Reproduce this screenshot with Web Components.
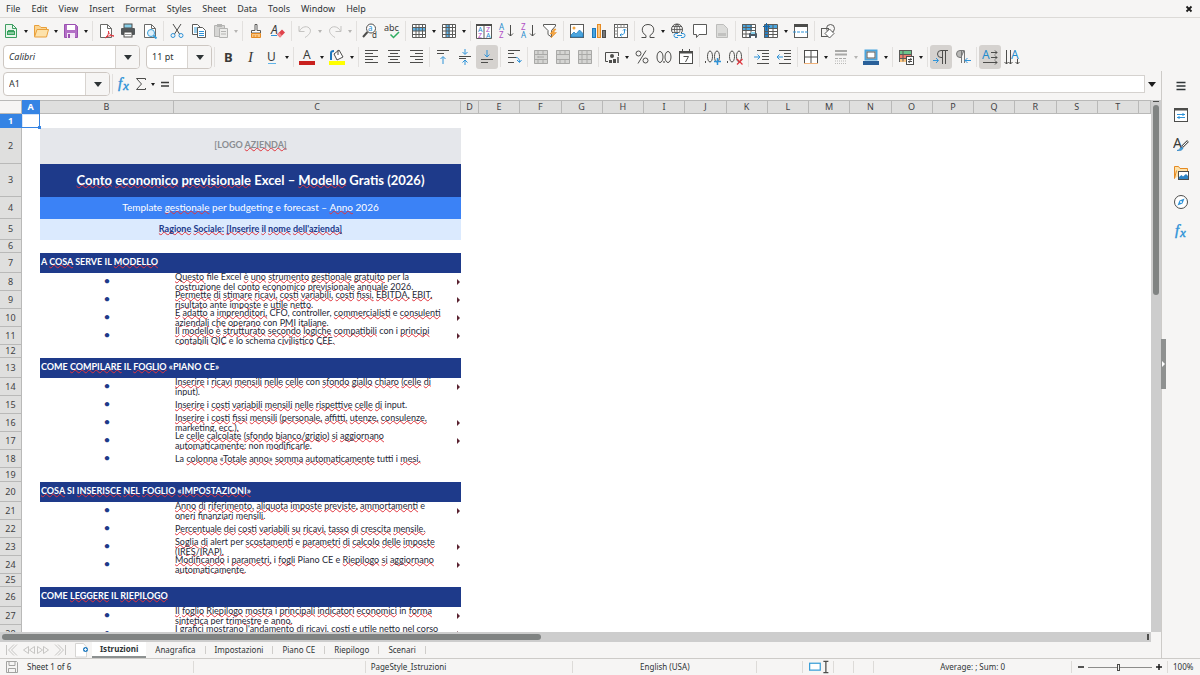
<!DOCTYPE html>
<html lang="it">
<head>
<meta charset="utf-8">
<title>Conto economico previsionale</title>
<style>
  html, body { margin: 0; height: 100%; }
  body {
    font-family: "Noto Sans", "Liberation Sans", sans-serif;
    font-size: 9px; line-height: 12px; color: #2e3436; background: #f6f5f4;
    overflow: hidden;
  }
</style>
</head>
<body>
<calc-window></calc-window>

<script>
/* Icon set: every entry is the body of a 16 by 16 svg. */
const K = 'fill="none" stroke="#4d4d4b"';
const B = 'fill="none" stroke="#2f93d8"';
const lines = (list, colour = '#4d4d4b') =>
  list.map(([x1, x2, y]) => `<path d="M${x1} ${y}H${x2}" stroke="${colour}" fill="none"/>`).join('');
const letter = (x, y, size, fill, ch, extra = '') =>
  `<text x="${x}" y="${y}" font-size="${size}" fill="${fill}" font-family="Noto Sans, sans-serif" ${extra}>${ch}</text>`;
const page = c => `<path d="M2.500 1.500H9.500L13.500 5.500V14.500H2.500Z" fill="#fff" stroke="${c}"/><path d="M9.500 1.500V5.500H13.500" fill="none" stroke="${c}"/>`;
const grid = c => `<path d="M1.500 1.500H14.500V14.500H1.500ZM1.500 4.500H14.500M1.500 8H14.500M1.500 11.500H14.500M5 1.500V14.500M8 1.500V14.500M11.500 1.500V14.500" fill="none" stroke="${c}"/>`;
const merged = mid => `<rect x="1" y="1" width="14" height="14" fill="#d5d5d3"/><path d="M1.500 1.500H14.500V14.500H1.500ZM1.500 5.500H14.500M1.500 10.500H14.500${mid}" fill="none" stroke="#a9a9a7"/>`;
const SERIF = 'font-style="italic" style="font-family:Liberation Serif"';
const ICONS = {
  new: page('#3f9f62').replace('#fff', '#e9f6ec') + '<path d="M5 7.500H11M5 10H11" stroke="#3f9f62"/><rect x="4" y="8" width="8" height="4" fill="#35a35c"/><path d="M5 10H11" stroke="#dff2e4"/>',
  open: '<path d="M1.500 13V2.500H6L8 4.500H13.500V6" fill="#fbd591" stroke="#e9a03b"/><path d="M1.500 14L4 6.500H15.500L13.500 14Z" fill="#fde2ab" stroke="#e9a03b"/>',
  save: '<path d="M1.500 1.500H12.500L14.500 3.500V14.500H1.500Z" fill="#b36fc6" stroke="#9a4fb0"/><rect x="4" y="2" width="8" height="5" fill="#fff"/><rect x="4" y="10" width="8" height="5" fill="#f4e8f7"/><rect x="5" y="11" width="2" height="4" fill="#9a4fb0"/>',
  pdf: page('#6a6a68') + '<path d="M7 15C10 13 11 10 10.500 8C10 10 13 13 16 13C13 12 9 13 7 15Z" fill="none" stroke="#e0343d"/>',
  print: '<rect x="4" y="1" width="8" height="4" fill="#8ad0ea" stroke="#4d4d4b"/><rect x="1" y="5" width="14" height="7" rx="1" fill="#54585a"/><rect x="4" y="9" width="8" height="5" fill="#fff" stroke="#4d4d4b"/><path d="M5 11.500H11" stroke="#9a9a98"/>',
  preview: page('#6a6a68') + `<circle cx="9" cy="10" r="3.500" fill="#dff0fa" stroke="#3b9fd8"/><path d="M11.500 12.500L14.500 15.500" stroke="#3b9fd8" stroke-width="2"/>`,
  cut: `<path d="M4 1L10.500 11M12 1L5.500 11" ${K}/><circle cx="4" cy="12.500" r="2" ${B}/><circle cx="12" cy="12.500" r="2" ${B}/>`,
  copy: '<path d="M1.500 1.500H6.500L9.500 4.500V11.500H1.500Z" fill="#fff" stroke="#5b5b59"/><path d="M3 5H8M3 7H8M3 9H8" stroke="#3b9fd8"/><path d="M6.500 4.500H11.500L14.500 7.500V14.500H6.500Z" fill="#fff" stroke="#5b5b59"/><path d="M8 8.500H13M8 10.500H13M8 12.500H13" stroke="#2f93d8"/>',
  paste: '<path d="M1.500 2.500H11.500V13.500H1.500Z" fill="#d6d6d4" stroke="#b4b4b2"/><rect x="4" y="1" width="5" height="3" fill="#b4b4b2"/><path d="M6.500 5.500H14.500V14.500H6.500Z" fill="#ececea" stroke="#b4b4b2"/><path d="M8 8.500H13M8 11H13" stroke="#b4b4b2"/>',
  clone: `<path d="M7 1.500H9V7.500H12.500V10H3.500V7.500H7Z" fill="#fff" stroke="#5b5b59"/><path d="M3.500 10.500H12.500V14.500H3.500Z" fill="#fbc682" stroke="#e58a22"/><path d="M6 12V14M9 12V14" stroke="#e58a22"/>`,
  clear: letter(1, 11, 12, '#3a3a38', 'A', 'font-style="italic"') + '<path d="M1 12.500H7" stroke="#2f93d8"/><path d="M7 11.500L12 6.500L15 9.500L10 14.500Z" fill="#e0434b"/><path d="M7 11.500L9 9.500L12 12.500L10 14.500Z" fill="#f08a8f"/>',
  undo: '<path d="M2 3V8.500H7.500M2.500 8C5 3 11 2.500 13 6C14.500 9 12 12 8 14.500" fill="none" stroke="#c4c3c1"/>',
  redo: '<path d="M14 3V8.500H8.500M13.500 8C11 3 5 2.500 3 6C1.500 9 4 12 8 14.500" fill="none" stroke="#c4c3c1"/>',
  find: `<circle cx="9" cy="5.500" r="4.500" fill="#fff" stroke="#4d4d4b"/><path d="M5.500 9L1 14" stroke="#4d4d4b" stroke-width="2"/>` + letter(6, 8, 8, '#1e8bcd', 'a') + letter(10, 15, 8, '#3a3a38', 'd'),
  spell: letter(0, 8, 9, '#3a3a38', 'abc') + '<path d="M6.500 11.500L9.500 14.500L15 9" fill="none" stroke="#2fae62" stroke-width="1.500"/>',
  row: '<rect x="1" y="1" width="14" height="14" fill="#fff"/><rect x="1" y="4" width="14" height="4" fill="#5fb3e8"/>' + grid('#5b5b59'),
  col: '<rect x="1" y="1" width="14" height="14" fill="#fff"/><rect x="5" y="1" width="4" height="14" fill="#5fb3e8"/>' + grid('#5b5b59'),
  sort: '<path d="M.500 1.500H15.500V15.500H.500ZM8 1V15.500" fill="#fff" stroke="#5b5b59"/><path d="M0 2H16" stroke="#4d4d4b" stroke-width="2"/>' + letter(2, 9, 7, '#1e8bcd', 'A') + letter(2, 15, 7, '#b14fc4', 'Z') + letter(10, 9, 7, '#b14fc4', 'Z') + letter(10, 15, 7, '#1e8bcd', 'A'),
  asc: letter(1, 7, 8, '#1e8bcd', 'A') + letter(1, 15, 8, '#b14fc4', 'Z') + `<path d="M12.500 2V13M10 10.500L12.500 13L15 10.500" ${K}/>`,
  desc: letter(1, 7, 8, '#b14fc4', 'Z') + letter(1, 15, 8, '#1e8bcd', 'A') + `<path d="M12.500 2V13M10 10.500L12.500 13L15 10.500" ${K}/>`,
  filter: '<path d="M1.500 1.500H13.500V3L9.500 7.500V14L6 11.500V7.500L1.500 3Z" fill="#fff" stroke="#5b5b59"/><path d="M12 6L8 11H11L9 15L14.500 9.500H11.500L14 6Z" fill="#f5a742" stroke="#e58a22" stroke-width=".5"/>',
  image: '<rect x="1.500" y="1.500" width="13" height="13" fill="#fff" stroke="#5b5b59"/><circle cx="5" cy="5" r="1.500" fill="#f5a742"/><path d="M2 14V12L5 9L7 11L10.500 7L14 10.500V14Z" fill="#4aa5de" stroke="#1e78bd" stroke-width=".7"/>',
  chart: '<rect x="1.500" y="5.500" width="3" height="9" fill="#4aa5de" stroke="#1e78bd"/><rect x="6.500" y="1.500" width="3" height="13" fill="#fbc682" stroke="#e58a22"/><rect x="11.500" y="7.500" width="3" height="7" fill="#777" stroke="#4d4d4b"/>',
  pivot: `<rect x="1.500" y="1.500" width="13" height="13" fill="#fff" stroke="#5b5b59"/><path d="M1.500 4.500H14.500M4.500 1.500V14.500M8 1.500V4.500M11 1.500V4.500M1.500 8H4.500M1.500 11H4.500" fill="none" stroke="#8b8b89"/><path d="M11.500 6V9C11.500 11 10 12 7 12M10 7.500L11.500 6L13 7.500M8.500 10.500L7 12L8.500 13.500" ${B}/>`,
  omega: `<path d="M1.500 14.500H6V12.500C.500 9.500 1 1.500 8 1.500C15 1.500 15.500 9.500 10 12.500V14.500H14.500" ${K}/>`,
  link: `<circle cx="7" cy="6.500" r="5.500" ${K}/><path d="M7 1V12M1.500 6.500H12.500M2.500 3.500H11.500M2.500 9.500H9M7 1C3.500 4 3.500 9 7 12M7 1C10.500 4 10.500 8 9 10" ${K} stroke-width=".8"/><rect x="3" y="10" width="13" height="6" fill="#f6f5f4"/><path d="M8 10.500H6A2 2 0 0 0 6 14.500H8M11 10.500H13A2 2 0 0 1 13 14.500H11M7 12.500H12" ${B}/>`,
  comment: '<path d="M1.500 1.500H14.500V11.500H7L4.500 14.500V11.500H1.500Z" fill="#fff" stroke="#5b5b59"/>',
  footer: '<path d="M2.500 1.500H9.500L13.500 5.500V14.500H2.500Z" fill="#dcdcda" stroke="#bdbdbb"/><rect x="4" y="10" width="8" height="3" fill="#c2c2c0"/>',
  area: '<rect x="1" y="1" width="14" height="13" fill="#fff"/><rect x="1" y="1" width="10" height="6" fill="#4aa5de"/><path d="M1.500 1.500H14.500V14.500H1.500ZM1.500 4.500H14.500M1.500 7.500H14.500M1.500 11H14.500M5 1.500V14.500M10 1.500V14.500" fill="none" stroke="#5b5b59"/><rect x="8" y="10" width="8" height="5" rx="1" fill="#4d5a66"/><rect x="10" y="9" width="4" height="2" fill="#8ad0ea"/><rect x="10" y="13" width="4" height="2" fill="#fff"/>',
  freeze: '<rect x="1" y="2" width="14" height="13" fill="#fff"/><rect x="1" y="2" width="14" height="4" fill="#4aa5de"/><rect x="1" y="2" width="4" height="13" fill="#2a80c2"/><path d="M1.500 1.500H14.500V14.500H1.500ZM5.500 5.500H14.500M5.500 8.500H14.500M5.500 11.500H14.500M5.500 1.500V14.500M10 1.500V14.500M1.500 8.500H5M1.500 11.500H5" fill="none" stroke="#5b5b59"/><path d="M3.500 0V7M0 3.500H7" stroke="#1667a8"/>',
  split: `<rect x="1.500" y="1.500" width="13" height="13" fill="#fff" stroke="#5b5b59"/><rect x="1" y="1" width="14" height="3" fill="#4d4d4b"/><path d="M0 9H16" ${B} stroke-dasharray="3 1"/>`,
  shapes: '<rect x="1.500" y="5.500" width="7" height="8" fill="#f6f5f4" stroke="#5b5b59"/><circle cx="10.500" cy="5.500" r="4" fill="none" stroke="#5b5b59"/><path d="M9.500 6L14 10.500L9.500 15L5 10.500Z" fill="#fff" stroke="#5b5b59"/>',
  bold: letter(4, 13, 13, '#3a3a38', 'B', 'font-weight="bold"'),
  italic: letter(6, 13, 15, '#3a3a38', 'I', SERIF),
  underline: letter(3, 12, 12, '#3a3a38', 'U') + '<path d="M4 14.500H12" stroke="#5fb3e8"/>',
  fontcolor: letter(4, 10, 12, '#3a3a38', 'A') + '<rect x="0" y="12" width="16" height="4" fill="#c9211e"/>',
  highlight: '<path d="M2 11V4Q2 2 5 2" stroke="#1e78bd" stroke-width="2" fill="none"/><path d="M5 5L10 1L14 8L8 11Z" fill="#fff" stroke="#4d4d4b"/><path d="M9 1V6" stroke="#4d4d4b"/><rect x="0" y="12" width="16" height="4" fill="#ff0"/>',
  left: lines([[1, 14, 1.5], [1, 9, 4.5], [1, 14, 7.5], [1, 9, 10.5], [1, 14, 13.5]]),
  center: lines([[2, 14, 1.5], [4, 12, 4.5], [2, 14, 7.5], [4, 12, 10.5], [2, 14, 13.5]]),
  right: lines([[2, 15, 1.5], [7, 15, 4.5], [2, 15, 7.5], [7, 15, 10.5], [2, 15, 13.5]]),
  top: lines([[2, 14, 1.5], [2, 9, 4.5]]) + `<path d="M8 15V8M5.500 10L8 7.500L10.500 10" ${B}/>`,
  middle: lines([[2, 14, 7.5], [2, 9, 9.5]]) + `<path d="M8 0V5M5.500 3L8 5.500L10.500 3M8 16V12M5.500 13.500L8 11L10.500 13.500" ${B}/>`,
  bottom: lines([[2, 14, 10.5], [2, 9, 13.5]]) + `<path d="M8 1V8M5.500 5.500L8 8L10.500 5.500" ${B}/>`,
  wrap: lines([[2, 14, 1.5], [2, 8, 4.5], [2, 10, 8.5], [2, 8, 13.5]]) + `<path d="M10 8.500Q13.500 8.500 13.500 13M11 11L13.500 13.500L15.500 11" ${B}/>`,
  merge1: merged('M5 1.500V5.500M10 1.500V5.500M5 10.500V14.500M10 10.500V14.500M5 7V9M5 8H11'),
  merge2: merged('M5 1.500V5.500M10 1.500V5.500M5 10.500V14.500M10 10.500V14.500'),
  merge3: merged('M5 1.500V14.500M10 1.500V14.500'),
  currency: '<path d="M1.500 12.500V3.500H14.500V7" fill="none" stroke="#4d4d4b"/><path d="M1.500 12.500H4" stroke="#4d4d4b"/><circle cx="8" cy="7" r="2" fill="#4d4d4b"/><rect x="5" y="11" width="3" height="3" fill="#4d4d4b"/><rect x="9" y="10" width="3" height="4" fill="#4d4d4b"/><rect x="13" y="8" width="2" height="6" fill="#777"/>',
  percent: `<circle cx="4.500" cy="4.500" r="2.500" ${K}/><circle cx="11.500" cy="11.500" r="2.500" ${K}/><path d="M12 1.500L4 14.500" ${K}/>`,
  number: `<ellipse cx="4" cy="8" rx="3" ry="5.500" ${K}/><ellipse cx="12" cy="8" rx="3" ry="5.500" ${K}/><path d="M8 12V14" stroke="#3a3a38"/>`,
  date: '<rect x="1.500" y="2.500" width="13" height="12" fill="#fff" stroke="#4d4d4b"/><path d="M1 3.500H15" stroke="#4d4d4b" stroke-width="2"/><path d="M4.500 0V3M11.500 0V3" stroke="#4d4d4b"/><path d="M5.500 7.500H10.500L7.500 13" fill="none" stroke="#4d4d4b"/>',
  adddec: `<path d="M.500 12V14" ${K}/><ellipse cx="5" cy="7.500" rx="2.500" ry="5.500" ${K}/><ellipse cx="12" cy="7.500" rx="2.500" ry="5.500" ${K}/><path d="M12.500 9V16M9 12.500H16" stroke="#2f93d8" stroke-width="1.500"/>`,
  deldec: `<path d="M.500 12V14" ${K}/><ellipse cx="5" cy="7.500" rx="2.500" ry="5.500" ${K}/><ellipse cx="12" cy="7.500" rx="2.500" ry="5.500" ${K}/><path d="M10 10L15.500 15.500M15.500 10L10 15.500" stroke="#e0343d" stroke-width="1.200"/>`,
  indent: lines([[3, 15, 1.5], [8, 15, 4.5], [8, 15, 7.5], [8, 15, 10.5], [3, 15, 14.5]]) + `<path d="M0 8H6M3.500 5.500L6 8L3.500 10.500" ${B}/>`,
  outdent: lines([[3, 15, 1.5], [8, 15, 4.5], [8, 15, 7.5], [8, 15, 10.5], [3, 15, 14.5]]) + `<path d="M7 8H1M3.500 5.500L1 8L3.500 10.500" ${B}/>`,
  borders: '<rect x="1.500" y="1.500" width="13" height="13" fill="#fff" stroke="#4d4d4b"/><path d="M8 1.500V14.500M1.500 8H14.500" stroke="#4d4d4b"/><path d="M1 14.500H15" stroke="#f0b27a"/>',
  linestyle: '<path d="M2 2H14M2 5.500H14" stroke="#a9a9a7" stroke-width="2"/><path d="M2 9.500H14" stroke="#a9a9a7" stroke-dasharray="3 1"/><path d="M2 12H14M2 14.500H14" stroke="#b9b9b7" stroke-dasharray="1 1"/>',
  bordercolor: '<rect x="2.500" y="1.500" width="11" height="9" fill="#fff" stroke="#4aa5de" stroke-width="2"/><rect x="4" y="3" width="8" height="6" fill="#fff" stroke="#5b5b59"/><rect x="0" y="12" width="16" height="4" fill="#2a6099"/>',
  conditional: '<rect x="1.500" y="1.500" width="12" height="11" fill="#fff" stroke="#5b5b59"/><rect x="2" y="2" width="11" height="3" fill="#6bc48b"/><rect x="2" y="6" width="11" height="3" fill="#ef7d6d"/><rect x="2" y="10" width="6" height="3" fill="#fbc682"/><path d="M5 1.500V12.500M1.500 5.500H13.500M1.500 9.500H13.500" stroke="#5b5b59"/><rect x="8.500" y="7.500" width="7" height="8" fill="#fff" stroke="#4d4d4b"/><path d="M10 10.500H14M10 12.500H14M13 9L11 14" stroke="#4d4d4b"/>',
  ltr: `<path d="M13 1.500H8A3.500 3.500 0 0 0 8 8.500H9M9.500 1.500V15M12.500 1.500V15M9 1.500H15" ${K}/><path d="M0 11.500H5M3 9L5.500 11.500L3 14" ${B}/>`,
  rtl: `<path d="M9 1.500H5A3.500 3.500 0 0 0 5 8.500H6Z" fill="#b9b9b7" stroke="#777"/><path d="M6.500 1.500V14M9.500 1.500V14" stroke="#777"/><path d="M16 11.500H10M12.500 9L10 11.500L12.500 14" ${B}/>`,
  horiz: letter(0, 10, 12, '#1e8bcd', 'A') + `<path d="M9 3.500H15M13 1.500L15 3.500L13 5.500M9 8.500H15M13 6.500L15 8.500L13 10.500M1 13.500H15M13 11.500L15 13.500L13 15.500" ${K}/>`,
  vert: letter(7, 10, 12, '#1e8bcd', 'A') + `<path d="M2.500 1V15M.500 13L2.500 15L4.500 13M6.500 1V15M4.500 13L6.500 15L8.500 13M13.500 10V15M11.500 13L13.500 15L15.500 13" ${K}/>`,
  fx: letter(2, 12, 15, '#2f93d8', 'f', SERIF + ' stroke="#2f93d8" stroke-width=".4"') + letter(7, 14, 13, '#2f93d8', 'x', SERIF + ' stroke="#2f93d8" stroke-width=".4"'),
  sum: `<path d="M12.500 4V2.500H3.500L8.500 8L3.500 13.500H12.500V12" ${K}/>`,
  equal: '<path d="M4 6.500H12M4 10H12" stroke="#3a3a38" stroke-width="1.500"/>',
  menu: '<path d="M3.500 4.500H12.500M3.500 8H12.500M3.500 11.500H12.500" stroke="#2e3436" stroke-width="1.500"/>',
  props: `<rect x="1.500" y="1.500" width="13" height="13" fill="#fff" stroke="#4d4d4b"/><path d="M1 2.500H15" stroke="#4d4d4b" stroke-width="2"/><path d="M4 7.500H12M10 6V9M4 10.500H12M6 9V12" ${B}/>`,
  style: letter(0, 12, 14, '#3a3a38', 'A') + '<path d="M15 5L9 11" stroke="#5b5b59" stroke-width="2.500"/><path d="M14.500 5.500L9.500 10.500" stroke="#fff"/><path d="M4 14.500Q7 14 7.500 11.500L10 12Q9.500 15 4 14.500Z" fill="#4aa5de" stroke="#1e78bd" stroke-width=".6"/>',
  gallery: '<path d="M1.500 13.500V1.500H5.500L7 3.500H14.500V6" fill="#fde2ab" stroke="#e58a22"/><path d="M1.500 13.500L3.500 5.500" stroke="#e58a22"/><rect x="5.500" y="6.500" width="10" height="8" fill="#fff" stroke="#4d4d4b"/><path d="M6 14V12L8.500 10L10 11.500L13 9L15 11V14Z" fill="#2f84c4"/>',
  compass: '<circle cx="8" cy="8" r="6.500" fill="#fff" stroke="#4d4d4b"/><path d="M11.500 4.500L9.500 9.500L4.500 11.500L6.500 6.500Z" fill="#2f93d8"/><circle cx="8" cy="8" r="1" fill="#fff"/>',
  floppy: '<path d="M2.500 2.500H12.500L13.500 3.500V13.500H2.500Z M5 2.500V6.500H11V2.500M4.500 13.500V9.500H11.500V13.500" fill="none" stroke="#a3a3a1"/>',
  first: '<path d="M2.500 3V13M10 2.500L4.500 8L10 13.500M13 2.500L7.500 8L13 13.500" fill="none" stroke="#c6c5c3"/>',
  prev: '<path d="M8.500 4.500L3.500 8L8.500 11.500ZM14.500 4.500L9.500 8L14.500 11.500Z" fill="none" stroke="#c6c5c3"/>',
  next: '<path d="M1.500 4.500L6.500 8L1.500 11.500ZM7.500 4.500L12.500 8L7.500 11.500Z" fill="none" stroke="#c6c5c3"/>',
  last: '<path d="M13.500 3V13M6 2.500L11.500 8L6 13.500M3 2.500L8.500 8L3 13.500" fill="none" stroke="#c6c5c3"/>',
  addsheet: '<path d="M.500 1.500H8.500L11.500 5V15H.500Z" fill="#fff" stroke="#d6d5d3"/><circle cx="10.500" cy="7.500" r="2.500" fill="#2a80c2"/><path d="M9 7.500H12M10.500 6V9" stroke="#fff" stroke-width=".8"/>',
  mode: `<rect x=".500" y="5" width="8.500" height="5.500" fill="#fff" stroke="#3b9fd8"/><path d="M11.500 3.500H15.500M13.500 3.500V12.500M11.500 12.500H15.500" ${K}/>`
};

/* Small base: renders a template into an open shadow root. */
class View extends HTMLElement {
  connectedCallback() {
    if (this.shadowRoot) return;
    const tpl = document.createElement('template');
    tpl.innerHTML = `<style>:host{display:block;box-sizing:border-box}*{box-sizing:border-box}
      button,input{font:inherit;color:inherit;margin:0;border:0;padding:0;background:none}
      ${this.styles ? this.styles() : ''}</style>${this.render()}`;
    this.attachShadow({ mode: 'open' }).append(tpl.content.cloneNode(true));
  }
}
const define = (name, styles, render) => customElements.define(name, class extends View {
  styles() { return styles; }
  render() { return render(this); }
});

define('ui-icon', ':host{display:inline-block;width:16px;height:16px;flex:none}svg{display:block;width:100%;height:100%}',
  el => `<svg viewBox="0 0 16 16" aria-hidden="true">${ICONS[el.getAttribute('name')]}</svg>`);

define('tool-button', `
  :host{display:flex;flex:none;align-items:center;height:24px}
  .main{width:22px;height:24px;display:grid;place-items:center;border-radius:3px}
  :host([active]) .main{background:#d5d2cf}
  .drop{width:8px;height:24px;display:grid;place-items:center}
  .drop::before{content:"";border:2px solid transparent;border-top:3px solid #1c1c1c;border-bottom:0}
  :host([off]) .drop::before{border-top-color:#b5b4b2}`,
  el => `<button class="main" aria-label="${el.getAttribute('icon')}"><ui-icon name="${el.getAttribute('icon')}"></ui-icon></button>
    ${el.hasAttribute('drop') ? '<button class="drop" aria-label="options"></button>' : ''}`);

define('tool-sep', ':host{flex:none;width:1px;height:20px;margin:0 2px;background:#e2e0de}', () => '');

define('tool-bar', ':host{display:flex;align-items:center;height:26px}', () => '<slot></slot>');

define('combo-box', `
  :host{display:flex;flex:none;height:24px;border:1px solid #cdc7c2;border-radius:4px;background:#fff;overflow:hidden}
  input{flex:1;min-width:0;padding:0 0 0 5px;outline:0}
  :host([slanted]) input{font-style:italic}
  button{width:24px;border-left:1px solid #d8d4d0;background:#f6f5f4;display:grid;place-items:center}
  button::before{content:"";border:4px solid transparent;border-top:5px solid #2e3436;border-bottom:0}`,
  el => `<input value="${el.getAttribute('value')}" aria-label="${el.getAttribute('label')}"><button aria-label="${el.getAttribute('label')} list"></button>`);

define('menu-bar', `
  :host{display:flex;align-items:center;gap:11px;height:17px;padding:0 6px}
  .close{margin-left:auto;width:10px;height:10px;display:grid;place-items:center}
  svg{width:8px;height:8px}`,
  () => ['File', 'Edit', 'View', 'Insert', 'Format', 'Styles', 'Sheet', 'Data', 'Tools', 'Window', 'Help']
    .map(t => `<button>${t}</button>`).join('') +
    '<button class="close" aria-label="close"><svg viewBox="0 0 8 8"><path d="M1.500 1.500L6.500 6.500M6.500 1.500L1.500 6.500" stroke="#1c1c1c" stroke-width="1.800"/></svg></button>');

const tools = spec => spec.split(' ').map(s => {
  if (s === '|') return '<tool-sep></tool-sep>';
  const [name, ...flags] = s.split(':');
  return `<tool-button icon="${name}" ${flags.join(' ')}></tool-button>`;
}).join('');

define('formula-bar', `
  :host{display:flex;align-items:center;height:29px;padding:0 2px 3px 3px}
  combo-box{width:107px}
  .fx{width:18px;height:16px}
  .sum,.eq{width:16px;height:16px}
  .drop{width:8px;height:16px;display:grid;place-items:center}
  .drop::before{content:"";border:2px solid transparent;border-top:3px solid #1c1c1c;border-bottom:0}
  input{flex:1;min-width:0;height:18px;background:#fff;border:1px solid #d5d2cf;outline:0}
  .expand{width:14px;height:16px;display:grid;place-items:center}
  .expand::before{content:"";border:4px solid transparent;border-top:5px solid #1c1c1c;border-bottom:0}`,
  () => `<combo-box value="A1" label="Name box"></combo-box><tool-sep></tool-sep>
    <button class="fx" aria-label="Function wizard"><ui-icon name="fx"></ui-icon></button>
    <button class="sum" aria-label="Sum"><ui-icon name="sum"></ui-icon></button><button class="drop" aria-label="Sum options"></button>
    <button class="eq" aria-label="Formula"><ui-icon name="equal"></ui-icon></button>
    <input aria-label="Input line"><button class="expand" aria-label="Expand"></button>`);

/* Sheet content. A leading ~ marks a word the spell checker underlines. */
const ROWS = [
  { h: 14, kind: 'cursor' },
  { h: 36, kind: 'logo', text: '[LOGO ~AZIENDA]' },
  { h: 33, kind: 'title', text: '~Conto ~economico ~previsionale Excel – ~Modello Gratis (2026)' },
  { h: 22, kind: 'sub', text: 'Template ~gestionale per budgeting e forecast – ~Anno 2026' },
  { h: 21, kind: 'firm', text: '~Ragione ~Sociale: ~[Inserire ~il ~nome ~dell\'azienda]' },
  { h: 13 },
  { h: 20, kind: 'head', text: 'A ~COSA SERVE IL ~MODELLO' },
  { h: 18, item: ['~Questo file Excel ~è ~uno ~strumento ~gestionale ~gratuito per la', '~costruzione del ~conto ~economico ~previsionale ~annuale 2026.'] },
  { h: 18, item: ['~Permette ~di ~stimare ~ricavi, ~costi ~variabili, ~costi ~fissi, ~EBITDA, ~EBIT,', '~risultato ante ~imposte e ~utile ~netto.'] },
  { h: 18, item: ['~È ~adatto a ~imprenditori, CFO, controller, ~commercialisti e ~consulenti', '~aziendali ~che ~operano con ~PMI ~italiane.'] },
  { h: 18, item: ['~Il ~modello ~è ~strutturato ~secondo ~logiche ~compatibili con i ~principi', '~contabili ~OIC e lo schema ~civilistico ~CEE.'] },
  { h: 13 },
  { h: 20, kind: 'head', text: 'COME ~COMPILARE IL ~FOGLIO «PIANO CE»' },
  { h: 18, item: ['~Inserire i ~ricavi ~mensili ~nelle ~celle con ~sfondo ~giallo ~chiaro ~(celle ~di', 'input).'] },
  { h: 18, item: ['~Inserire i ~costi ~variabili ~mensili ~nelle ~rispettive ~celle ~di input.'] },
  { h: 18, item: ['~Inserire i ~costi ~fissi ~mensili ~(personale, ~affitti, ~utenze, ~consulenze,', 'marketing, ~ecc.).'] },
  { h: 18, item: ['Le ~celle ~calcolate ~(sfondo ~bianco/grigio) ~si ~aggiornano', '~automaticamente: non ~modificarle.'] },
  { h: 18, item: ['La ~colonna ~«Totale ~anno» ~somma ~automaticamente tutti i ~mesi.'] },
  { h: 14 },
  { h: 20, kind: 'head', text: '~COSA SI ~INSERISCE ~NEL ~FOGLIO ~«IMPOSTAZIONI»' },
  { h: 18, item: ['~Anno ~di ~riferimento, ~aliquota ~imposte ~previste, ~ammortamenti e', '~oneri ~finanziari ~mensili.'] },
  { h: 18, item: ['~Percentuale ~dei ~costi ~variabili ~su ~ricavi, ~tasso ~di ~crescita ~mensile.'] },
  { h: 18, item: ['~Soglia ~di alert per ~scostamenti e ~parametri ~di ~calcolo ~delle ~imposte', '~(IRES/IRAP).'] },
  { h: 18, item: ['~Modificando i ~parametri, i ~fogli Piano CE e ~Riepilogo ~si ~aggiornano', '~automaticamente.'] },
  { h: 13 },
  { h: 20, kind: 'head', text: 'COME ~LEGGERE IL ~RIEPILOGO' },
  { h: 18, item: ['~Il ~foglio ~Riepilogo ~mostra i ~principali ~indicatori ~economici in ~forma', '~sintetica per ~trimestre e ~anno.'] },
  { h: 18, item: ['~I ~grafici ~mostrano ~l\'andamento ~di ~ricavi, ~costi e ~utile ~netto ~nel ~corso', '~dell\'anno.'] }
];
const marked = t => t.split(' ').map(w => w[0] === '~' ? `<span class="w">${w.slice(1)}</span>` : w).join(' ');
const COLS = 'EFGHIJKLMNOPQRST'.split('');

define('sheet-grid', `
  :host{overflow:hidden;background:#fff;min-width:0;min-height:0}
  table{border-collapse:separate;border-spacing:0;table-layout:fixed;width:100%}
  th,td{padding:0}
  .corner{background:#f6f5f4}
  th{background:#dfdfde;font-weight:normal;font-size:9px;line-height:12px;color:#3f4244;
     border-right:1px solid #b9b9b8;border-bottom:1px solid #b9b9b8}
  thead th{height:14px;border-top:1px solid #b9b9b8}
  th.on{background:#3584e4;color:#fff;font-weight:bold;border-color:#3584e4}
  td{font-family:Lato,Carlito,sans-serif;color:#1f2937}
  .cell{display:flex;align-items:center;justify-content:center;overflow:hidden;white-space:nowrap;padding-bottom:2px}
  .cursor{position:relative;overflow:visible;box-shadow:inset -1px -1px #3584e4,inset 1px 1px #d5e4f8}
  .cursor::after{content:"";position:absolute;right:-1px;bottom:-1px;width:3px;height:3px;background:#3584e4}
  .logo{background:#e5e7eb;color:#8a8d91;font-weight:bold;font-size:9px}
  .title{background:#1e3a8a;color:#fff;font-weight:bold;font-size:13px;line-height:16px}
  .sub{background:#3b82f6;color:#fff;font-size:10px}
  .firm{background:#dbeafe;color:#1e3a8a;font-weight:bold;font-size:9px}
  .head{background:#1e3a8a;color:#fff;font-weight:bold;font-size:9px;justify-content:flex-start;padding-left:1px}
  .dot{color:#1e3a8a;font-size:12px}
  .item{justify-content:space-between;padding:0 1px;font-size:9px;line-height:10px}
  .more{width:3px;height:6px;flex:none;fill:#5a2230}
  .w{text-decoration:underline wavy #e0343d 1px;text-underline-offset:-1px;text-decoration-skip-ink:none}`,
  () => `<table><colgroup><col style="width:22px"><col style="width:18px"><col style="width:134px"><col style="width:287px"><col style="width:18px">${COLS.map(() => '<col>').join('')}<col style="width:12px"></colgroup>
  <thead><tr><th class="corner"></th><th class="on">A</th><th>B</th><th>C</th><th>D</th>${COLS.map(c => `<th>${c}</th>`).join('')}<th></th></tr></thead>
  <tbody>${ROWS.map((r, i) => {
    const style = `style="height:${r.h}px"`;
    const head = `<th scope="row" class="${i ? '' : 'on'}">${i + 1}</th>`;
    let cells = '<td></td>';
    if (r.kind === 'cursor') cells = `<td><div class="cell cursor" ${style}></div></td>`;
    else if (r.item) cells += `<td><div class="cell dot" ${style}>•</div></td><td><div class="cell item" ${style}><div>${r.item.map(marked).join('<br>')}</div>${r.item.length > 1 ? '<svg class="more" viewBox="0 0 3 6"><path d="M0 0L3 3L0 6Z"/></svg>' : ''}</div></td>`;
    else if (r.kind) cells += `<td colspan="2"><div class="cell ${r.kind}" ${style}><div>${marked(r.text)}</div></div></td>`;
    return `<tr ${style}>${head}${cells}</tr>`;
  }).join('')}</tbody></table>`);

define('scroll-bar', `
  :host{background:#cdcdcd;display:flex;padding:2px}
  .thumb{background:#808382;border-radius:3px}
  .end{background:#4d4d4b}
  :host([vertical]){flex-direction:column;align-items:stretch;padding-top:1px}
  :host([vertical]) .thumb{height:36%}
  :host([vertical]) .end{order:-1;height:1px;margin-bottom:3px}
  :host(:not([vertical])) .thumb{width:47%}
  :host(:not([vertical])) .end{width:2px;margin-left:auto}`,
  () => '<div class="thumb"></div><div class="end"></div>');

define('sheet-tabs', `
  :host{display:flex;height:16px;padding-left:4px;font-size:8px}
  .nav{display:flex;width:69px}
  .nav button{width:16px;height:16px}
  .add{width:19px;height:16px;display:grid;place-items:center}
  .tab{padding:0 0 0 9px;display:flex;align-items:center;gap:9px}
  .tab::after{content:"";width:1px;height:8px;background:#cfcdca}
  .on{background:#fff;font-weight:bold;padding:0 8px;border-bottom:2px solid #8d9191}
  .on::after{display:none}`,
  () => `<div class="nav">${['first', 'prev', 'next', 'last'].map(n => `<button aria-label="${n} sheet"><ui-icon name="${n}"></ui-icon></button>`).join('')}</div>
    <button class="add" aria-label="Add sheet"><ui-icon name="addsheet"></ui-icon></button>
    ${['Istruzioni', 'Anagrafica', 'Impostazioni', 'Piano CE', 'Riepilogo', 'Scenari'].map((t, i) => `<button class="tab${i ? '' : ' on'}">${t}</button>`).join('')}`);

define('side-bar', `
  :host{position:relative;display:flex;flex-direction:column;align-items:center;gap:13px;padding-top:7px;border-left:1px solid #cdcbc8}
  button{width:16px;height:16px}
  .grip{position:absolute;left:-1px;top:268px;width:5px;height:50px;background:#8f9190;display:grid;place-items:center}
  .grip::before{content:"";border:3px solid transparent;border-left-color:#fff;border-right:0}`,
  () => ['menu', 'props', 'style', 'gallery', 'compass', 'fx'].map(n => `<button aria-label="${n}"><ui-icon name="${n}"></ui-icon></button>`).join('') +
    '<button class="grip" aria-label="Hide sidebar"></button>');

define('status-bar', `
  :host{display:grid;grid-template-columns:22px 172fr 172fr 208fr 184fr 46px 31px 20px 20px 198fr 96px 32px;height:17px;align-items:center;border-top:1px solid #cdcbc8;font-size:8px}
  .f{height:12px;border-right:1px solid #dddbd8;padding:0 5px;white-space:nowrap}
  .f:last-child,.n{border-right:0}
  .c{text-align:center}
  .ic{display:flex;align-items:center;padding:0 4px}
  .mode ui-icon{width:20px;height:20px}
  .mode{padding:0 6px}
  .zoom{display:flex;align-items:center;gap:2px;padding:0 3px 0 4px}
  .zoom button{width:10px;height:12px;display:grid;place-items:center}
  .zoom svg{width:8px;height:8px}
  input{flex:1;min-width:0;height:12px;appearance:none;-webkit-appearance:none}
  input::-webkit-slider-runnable-track{height:1px;background:#8d8d8b}
  input::-webkit-slider-thumb{-webkit-appearance:none;width:3px;height:7px;margin-top:-3px;background:#f6f5f4;border:1px solid #4d4d4b}`,
  () => `<div class="f n ic"><ui-icon name="floppy"></ui-icon></div><div class="f">Sheet 1 of 6</div><div class="f"></div><div class="f">PageStyle_Istruzioni</div>
    <div class="f c">English (USA)</div><div class="f"></div><div class="f ic mode"><ui-icon name="mode"></ui-icon></div><div class="f"></div><div class="f"></div>
    <div class="f c">Average: ; Sum: 0</div>
    <div class="f zoom"><button aria-label="Zoom out"><svg viewBox="0 0 8 8"><path d="M1 4H7" stroke="#1c1c1c" stroke-width="1.500"/></svg></button>
    <input type="range" min="0" max="100" value="48" aria-label="Zoom"><button aria-label="Zoom in"><svg viewBox="0 0 8 8"><path d="M1 4H7M4 1V7" stroke="#1c1c1c" stroke-width="1.500"/></svg></button></div>
    <div class="f">100%</div>`);

define('calc-window', `
  :host{display:flex;flex-direction:column;height:100vh}
  .bars{padding-bottom:1px;border-top:1px solid #dcdad7}
  .font{width:137px;margin:0 6px 0 3px}
  .size{width:66px}
  .body{flex:1;min-height:0;display:grid;grid-template-columns:1fr 39px}
  .doc{display:grid;min-width:0;min-height:0;grid-template-rows:29px 1fr 10px 16px;grid-template-columns:1fr 10px}
  formula-bar,sheet-tabs{grid-column:1/-1}`,
  () => `<menu-bar></menu-bar>
  <div class="bars">
    <tool-bar>${tools('new:drop open:drop save:drop | pdf print preview | cut copy paste:drop:off | clone clear | undo:drop:off redo:drop:off | find spell | row:drop col:drop | sort asc desc filter | image chart pivot | omega:drop link comment footer | area freeze:drop split | shapes')}</tool-bar>
    <tool-bar><combo-box class="font" slanted value="Calibri" label="Font name"></combo-box><combo-box class="size" value="11 pt" label="Font size"></combo-box>
    ${tools('| bold italic underline:drop | fontcolor:drop highlight:drop | left center right | top middle bottom:active | wrap | merge1 merge2 merge3 | currency:drop percent number date | adddec deldec | indent outdent | borders:drop linestyle:drop:off bordercolor:drop | conditional:drop | ltr:active rtl | horiz:active vert')}</tool-bar>
  </div>
  <div class="body">
    <div class="doc"><formula-bar></formula-bar><sheet-grid></sheet-grid><scroll-bar vertical></scroll-bar><scroll-bar></scroll-bar><div></div><sheet-tabs></sheet-tabs></div>
    <side-bar></side-bar>
  </div>
  <status-bar></status-bar>`);
</script>
</body>
</html>
